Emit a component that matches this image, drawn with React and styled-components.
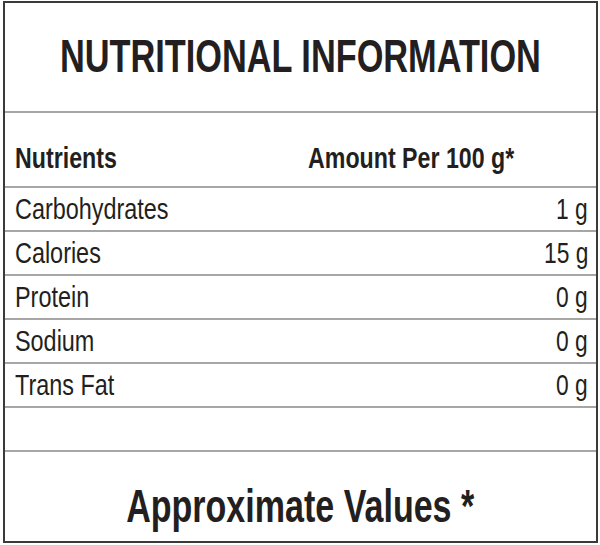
import styled, { createGlobalStyle } from 'styled-components';

const GlobalStyle = createGlobalStyle`
  html, body {
    margin: 0;
    padding: 0;
    background: #ffffff;
  }
  body {
    font-family: "Liberation Sans", Arial, sans-serif;
    color: #231f20;
  }
`;

const NUTRIENTS = [
  { name: 'Carbohydrates', amount: '1 g' },
  { name: 'Calories', amount: '15 g' },
  { name: 'Protein', amount: '0 g' },
  { name: 'Sodium', amount: '0 g' },
  { name: 'Trans Fat', amount: '0 g' },
];

const Label = styled.section`
  box-sizing: border-box;
  margin: 1px 0 0 3px;
  width: 595px;
  height: 542px;
  border: 2px solid #3a3a3a;
  display: flex;
  flex-direction: column;
`;

// the print uses a condensed grotesque; squeeze Liberation Sans to match
const Narrow = styled.span`
  display: inline-block;
  white-space: nowrap;
  transform: scaleX(${({ $x }) => $x || 0.78});
  transform-origin: ${({ $origin }) => $origin || 'left'} center;
`;

const TitleBar = styled.header`
  height: 108px;
  display: flex;
  align-items: center;
  justify-content: center;
  border-bottom: 2px solid #a6a6a6;
`;

const Title = styled.h1`
  margin: 0;
  font-size: 47px;
  font-weight: 700;
  line-height: 1;
  padding-bottom: 4px;
  white-space: nowrap;
`;

const Row = styled.div`
  height: ${({ $h }) => $h || 42}px;
  display: grid;
  grid-template-columns: 293px 1fr;
  align-items: ${({ $align }) => $align || 'center'};
  border-bottom: 2px solid #a6a6a6;
  padding: 0 8px 0 10px;
`;

const HeadCell = styled.div`
  font-size: 29px;
  font-weight: 700;
  line-height: 1;
  padding-bottom: ${({ $pb }) => $pb || 0}px;
`;

const Cell = styled.div`
  font-size: 30px;
  font-weight: 400;
  line-height: 1;
  text-align: ${({ $right }) => ($right ? 'right' : 'left')};
`;

const Footer = styled.footer`
  flex: 1;
  display: flex;
  align-items: flex-end;
  justify-content: center;
  padding-bottom: 12px;
`;

const FooterText = styled.p`
  margin: 0;
  font-size: 46px;
  font-weight: 700;
  line-height: 1;
  white-space: nowrap;
`;

export default function App() {
  return (
    <>
      <GlobalStyle />
      <Label>
        <TitleBar>
          <Title>
            <Narrow $x={0.73} $origin="center">NUTRITIONAL INFORMATION</Narrow>
          </Title>
        </TitleBar>
        <Row $h={73} $align="end">
          <HeadCell $pb={13}>
            <Narrow $x={0.8}>Nutrients</Narrow>
          </HeadCell>
          <HeadCell $pb={13}>
            <Narrow $x={0.8}>Amount Per 100 g*</Narrow>
          </HeadCell>
        </Row>
        {NUTRIENTS.map((n) => (
          <Row key={n.name}>
            <Cell>
              <Narrow>{n.name}</Narrow>
            </Cell>
            <Cell $right>
              <Narrow $x={0.76} $origin="right">{n.amount}</Narrow>
            </Cell>
          </Row>
        ))}
        <Row />
        <Footer>
          <FooterText>
            <Narrow $x={0.74} $origin="center">Approximate Values *</Narrow>
          </FooterText>
        </Footer>
      </Label>
    </>
  );
}
